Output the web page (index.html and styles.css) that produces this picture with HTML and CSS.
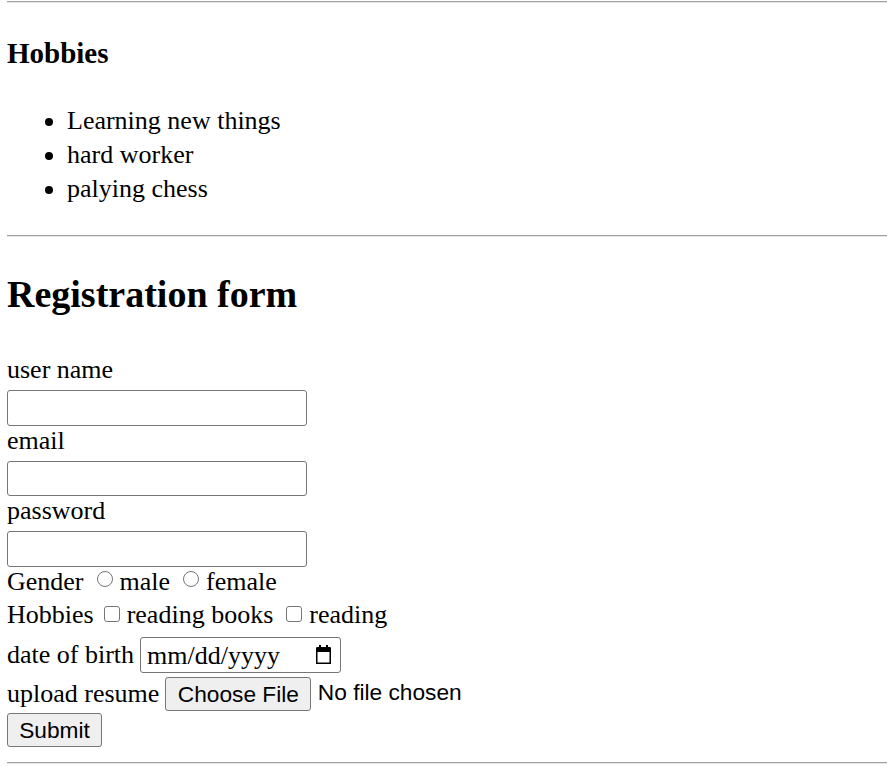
FILE: index.html
```html
<!DOCTYPE html>
<html lang="en">
<head>
<meta charset="utf-8">
<title>Registration form</title>
<link rel="stylesheet" href="styles.css">
</head>
<body>
<hr class="rule rule-top">
<h3 class="section-title">Hobbies</h3>
<ul class="hobby-list">
  <li>Learning new things</li>
  <li>hard worker</li>
  <li>palying chess</li>
</ul>
<hr class="rule rule-mid">
<h2 class="form-title">Registration form</h2>
<form class="reg-form">
  <label class="field-label" for="uname">user name</label>
  <input class="text-input" id="uname" type="text">
  <label class="field-label" for="email">email</label>
  <input class="text-input" id="email" type="text">
  <label class="field-label" for="pwd">password</label>
  <input class="text-input" id="pwd" type="password">

  <div class="row row-gender">
    <span class="row-label">Gender</span>
    <input class="radio" type="radio" name="gender" id="male">
    <label class="opt" for="male">male</label>
    <input class="radio" type="radio" name="gender" id="female">
    <label class="opt" for="female">female</label>
  </div>

  <div class="row row-hobbies">
    <span class="row-label">Hobbies</span>
    <input class="check" type="checkbox" id="books">
    <label class="opt" for="books">reading books</label>
    <input class="check" type="checkbox" id="reading">
    <label class="opt" for="reading">reading</label>
  </div>

  <div class="row row-date">
    <span class="row-label">date of birth</span>
    <div class="date-box">
      <span class="date-text">mm/dd/yyyy</span>
      <svg class="cal-icon" width="15" height="19" viewBox="0 0 15 19" aria-hidden="true">
        <rect x="3" y="0" width="2" height="4" fill="#000"/>
        <rect x="10" y="0" width="2" height="4" fill="#000"/>
        <path d="M1.5 3h12a1 1 0 0 1 1 1v13.5a1 1 0 0 1-1 1h-12a1 1 0 0 1-1-1V4a1 1 0 0 1 1-1z" fill="none" stroke="#000" stroke-width="2"/>
        <rect x="0.5" y="3" width="14" height="4" fill="#000"/>
      </svg>
    </div>
  </div>

  <div class="row row-upload">
    <span class="row-label">upload resume</span>
    <button class="btn btn-file" type="button">Choose File</button>
    <span class="file-status">No file chosen</span>
  </div>

  <div class="row row-submit">
    <button class="btn btn-submit" type="submit">Submit</button>
  </div>
</form>
<hr class="rule rule-bottom">
</body>
</html>
```
FILE: styles.css
```css
html, body {
  background: #fff;
}
body {
  margin: 0;
  padding: 0 0 0 7px;
  font-family: "Liberation Serif", "Times New Roman", serif;
  font-size: 26px;
  color: #000;
  overflow: hidden;
}
.rule {
  display: block;
  margin: 0;
  height: 0;
  border: 0;
  border-top: 1px solid #a0a0a0;
  border-bottom: 1px solid #e6e6e6;
}
.rule-top { margin-top: 1px; }
.rule-mid { margin-top: 29.5px; }
.rule-bottom { margin-top: 15px; }

.section-title {
  margin: 33px 0 0;
  font-size: 29px;
  line-height: 34px;
  font-weight: bold;
}
.hobby-list {
  margin: 33.5px 0 0;
  padding-left: 60px;
  line-height: 34px;
}
.form-title {
  margin: 35px 0 0;
  font-size: 38px;
  line-height: 44px;
  font-weight: bold;
}
.reg-form {
  margin-top: 39px;
  display: flex;
  flex-direction: column;
  align-items: flex-start;
}
.field-label {
  display: block;
  line-height: 29px;
  padding-bottom: 6px;
}
.text-input {
  box-sizing: border-box;
  width: 300px;
  height: 35.5px;
  margin: 0;
  border: 1px solid #767676;
  border-radius: 3px;
  background: #fff;
  font: inherit;
  padding: 1px 3px;
}
.row {
  display: flex;
  align-items: center;
  line-height: 29px;
  white-space: nowrap;
}
.row > * { flex: none; }
.row-gender { height: 29px; margin-top: 0; }
.row-hobbies { height: 29px; margin-top: 4.5px; }
.row-date { height: 36px; margin-top: 7.5px; }
.row-upload { height: 34px; margin-top: 4px; }
.row-submit { height: 34px; margin-top: 2px; }

.row-gender .row-label { margin-right: 13px; }
.row-hobbies .row-label { margin-right: 10px; }
.row-date .row-label { margin-right: 6px; }
.row-upload .row-label { margin-right: 6px; }

.radio {
  -webkit-appearance: none;
  appearance: none;
  box-sizing: border-box;
  width: 16px;
  height: 16px;
  min-width: 16px;
  margin: 0 7px 0 0;
  border: 1px solid #767676;
  border-radius: 50%;
  background: #fff;
  position: relative;
  top: -2px;
}
.check {
  -webkit-appearance: none;
  appearance: none;
  box-sizing: border-box;
  width: 16px;
  height: 16px;
  min-width: 16px;
  margin: 0 7px 0 0;
  border: 1px solid #767676;
  border-radius: 3px;
  background: #fff;
  position: relative;
  top: -1px;
}
.opt { margin-right: 13px; }

.date-box {
  box-sizing: border-box;
  width: 201px;
  height: 36px;
  border: 1px solid #767676;
  border-radius: 3px;
  display: flex;
  align-items: center;
  justify-content: space-between;
  padding: 0 9px 0 6px;
  background: #fff;
}
.date-text {
  font-size: 26px;
  line-height: 29px;
  padding-top: 2px;
}
.cal-icon {
  display: block;
}

.btn {
  box-sizing: border-box;
  height: 34px;
  margin: 0;
  padding: 0;
  border: 1px solid #767676;
  border-radius: 3px;
  background: #efefef;
  color: #000;
  font-family: "Liberation Sans", Arial, sans-serif;
  font-size: 22.7px;
  line-height: 30px;
}
.btn-file { width: 146px; }
.btn-submit { width: 95px; }
.file-status {
  margin-left: 6.5px;
  font-family: "Liberation Sans", Arial, sans-serif;
  font-size: 22.7px;
  position: relative;
  top: -1px;
}
```
